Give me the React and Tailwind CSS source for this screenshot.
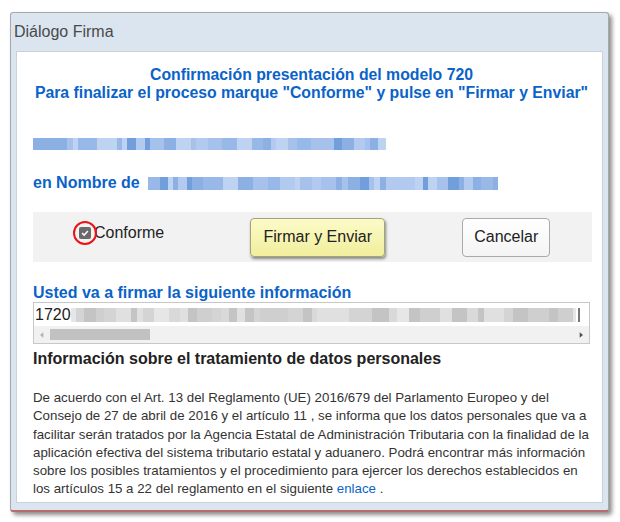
import React from "react";

const blue = ["bg-[#8cb0e4]", "bg-[#a6c2ec]", "bg-[#739edc]", "bg-[#b2caef]", "bg-[#98b8e8]", "bg-[#bed3f2]"];
const gray = ["bg-[#cfcfcf]", "bg-[#d9d9d9]", "bg-[#c4c4c4]", "bg-[#e0e0e0]", "bg-[#d4d4d4]", "bg-[#e6e6e6]"];
const widths = ["w-[6px]", "w-[9px]", "w-[12px]", "w-[5px]", "w-[15px]", "w-[8px]", "w-[11px]"];

function Blur({ total, palette, seed = 1, h = "h-[12px]" }) {
  const blocks = [];
  let used = 0;
  let s = seed;
  while (used < total) {
    s = (s * 9301 + 49297) % 233280;
    const wi = s % widths.length;
    const ci = Math.floor(s / 7) % palette.length;
    const px = [6, 9, 12, 5, 15, 8, 11][wi];
    blocks.push(<div key={used} className={`${widths[wi]} ${palette[ci]} ${h} shrink-0`} />);
    used += px;
  }
  return <div className="flex overflow-hidden shrink-0" style={{ width: total }}>{blocks}</div>;
}

export default function App() {
  return (
    <div className="w-[620px] h-[522px] bg-white pt-[12px] pl-[10px] font-['Liberation_Sans',Arial,sans-serif]">
      {/* Dialog */}
      <div className="w-[599px] h-[500px] bg-[#dae5ef] border border-[#a8a8a8] border-b-2 border-b-[#b96a6a] rounded-[3px] shadow-[3px_3px_4px_rgba(0,0,0,0.45)] flex flex-col">
        <div className="h-[38px] flex items-center px-[3px] text-[16px] text-[#4a4a4a]">Diálogo Firma</div>

        <div className="mx-[5px] h-[452px] bg-white border border-[#c9d2da] pl-[16px] pr-[12px] text-[#333]">
          {/* heading */}
          <div className="pt-[14px] text-center text-[15.8px] font-bold leading-[18px] text-[#0a63c8] whitespace-nowrap">
            <div>Confirmación presentación del modelo 720</div>
            <div>Para finalizar el proceso marque "Conforme" y pulse en "Firmar y Enviar"</div>
          </div>

          <div className="mt-[36px] h-[12px]">
            <Blur total={353} palette={blue} seed={3} />
          </div>

          <div className="mt-[24px] flex items-center h-[18px]">
            <span className="text-[16px] font-bold text-[#0a63c8]">en Nombre de</span>
            <div className="ml-[8px]">
              <Blur total={350} palette={blue} seed={11} h="h-[13px]" />
            </div>
          </div>

          {/* action band */}
          <div className="mt-[20px] h-[50px] w-[559px] bg-[#f2f2f2] flex items-center">
            <label className="ml-[46px] flex items-center -mt-[8px]">
              <span className="relative w-[12px] h-[12px] rounded-[2px] bg-[#6a6a6a] flex items-center justify-center">
                <svg viewBox="0 0 12 12" className="w-[10px] h-[10px]">
                  <path d="M2.5 6.2 L5 8.5 L9.5 3.5" stroke="white" strokeWidth="1.8" fill="none" />
                </svg>
                <span className="absolute -left-[6px] -top-[6px] w-[24px] h-[24px] rounded-full border-2 border-[#e8141a]" />
              </span>
              <span className="ml-[3px] text-[16px] text-[#222]">Conforme</span>
            </label>
            <button className="ml-[86px] w-[135px] h-[39px] rounded-[4px] border border-[#a6a37a] bg-gradient-to-b from-[#fcfbc8] to-[#f1ee9c] shadow-[1px_2px_3px_rgba(0,0,0,0.45)] text-[16px] text-[#222]">
              Firmar y Enviar
            </button>
            <button className="ml-[77px] w-[88px] h-[39px] rounded-[4px] border border-[#aaa] bg-gradient-to-b from-white to-[#f4f4f4] text-[16px] text-[#222]">
              Cancelar
            </button>
          </div>

          <div className="mt-[22px] text-[16px] font-bold leading-[18px] text-[#0a63c8]">
            Usted va a firmar la siguiente información
          </div>

          {/* scroll box */}
          <div className="w-[557px] h-[42px] border border-[#c8c8c8] flex flex-col">
            <div className="h-[23px] flex items-center px-[1px] overflow-hidden">
              <span className="text-[16px] text-[#222]">1720</span>
              <Blur total={505} palette={gray} seed={7} h="h-[14px]" />
              <div className="ml-[2px] w-[2px] h-[14px] bg-[#777]" />
            </div>
            <div className="flex-1 bg-[#f1f1f1] flex items-center px-[6px]">
              <svg viewBox="0 0 6 8" className="w-[4px] h-[6px]"><path d="M5 0 L0 4 L5 8 Z" fill="#b0b0b0" /></svg>
              <div className="ml-[6px] w-[100px] h-[11px] bg-[#c1c1c1]" />
              <div className="flex-1" />
              <svg viewBox="0 0 6 8" className="w-[4px] h-[6px]"><path d="M1 0 L6 4 L1 8 Z" fill="#505050" /></svg>
            </div>
          </div>

          <div className="mt-[6px] text-[16px] font-bold leading-[18px] text-[#222]">
            Información sobre el tratamiento de datos personales
          </div>

          <div className="mt-[21px] text-[13.3px] leading-[18.3px] text-[#333] whitespace-nowrap">
            <div>De acuerdo con el Art. 13 del Reglamento (UE) 2016/679 del Parlamento Europeo y del</div>
            <div>Consejo de 27 de abril de 2016 y el artículo 11 , se informa que los datos personales que va a</div>
            <div>facilitar serán tratados por la Agencia Estatal de Administración Tributaria con la finalidad de la</div>
            <div>aplicación efectiva del sistema tributario estatal y aduanero. Podrá encontrar más información</div>
            <div>sobre los posibles tratamientos y el procedimiento para ejercer los derechos establecidos en</div>
            <div>
              los artículos 15 a 22 del reglamento en el siguiente <a className="text-[#0a63c8]">enlace</a> .
            </div>
          </div>
        </div>
      </div>
    </div>
  );
}
